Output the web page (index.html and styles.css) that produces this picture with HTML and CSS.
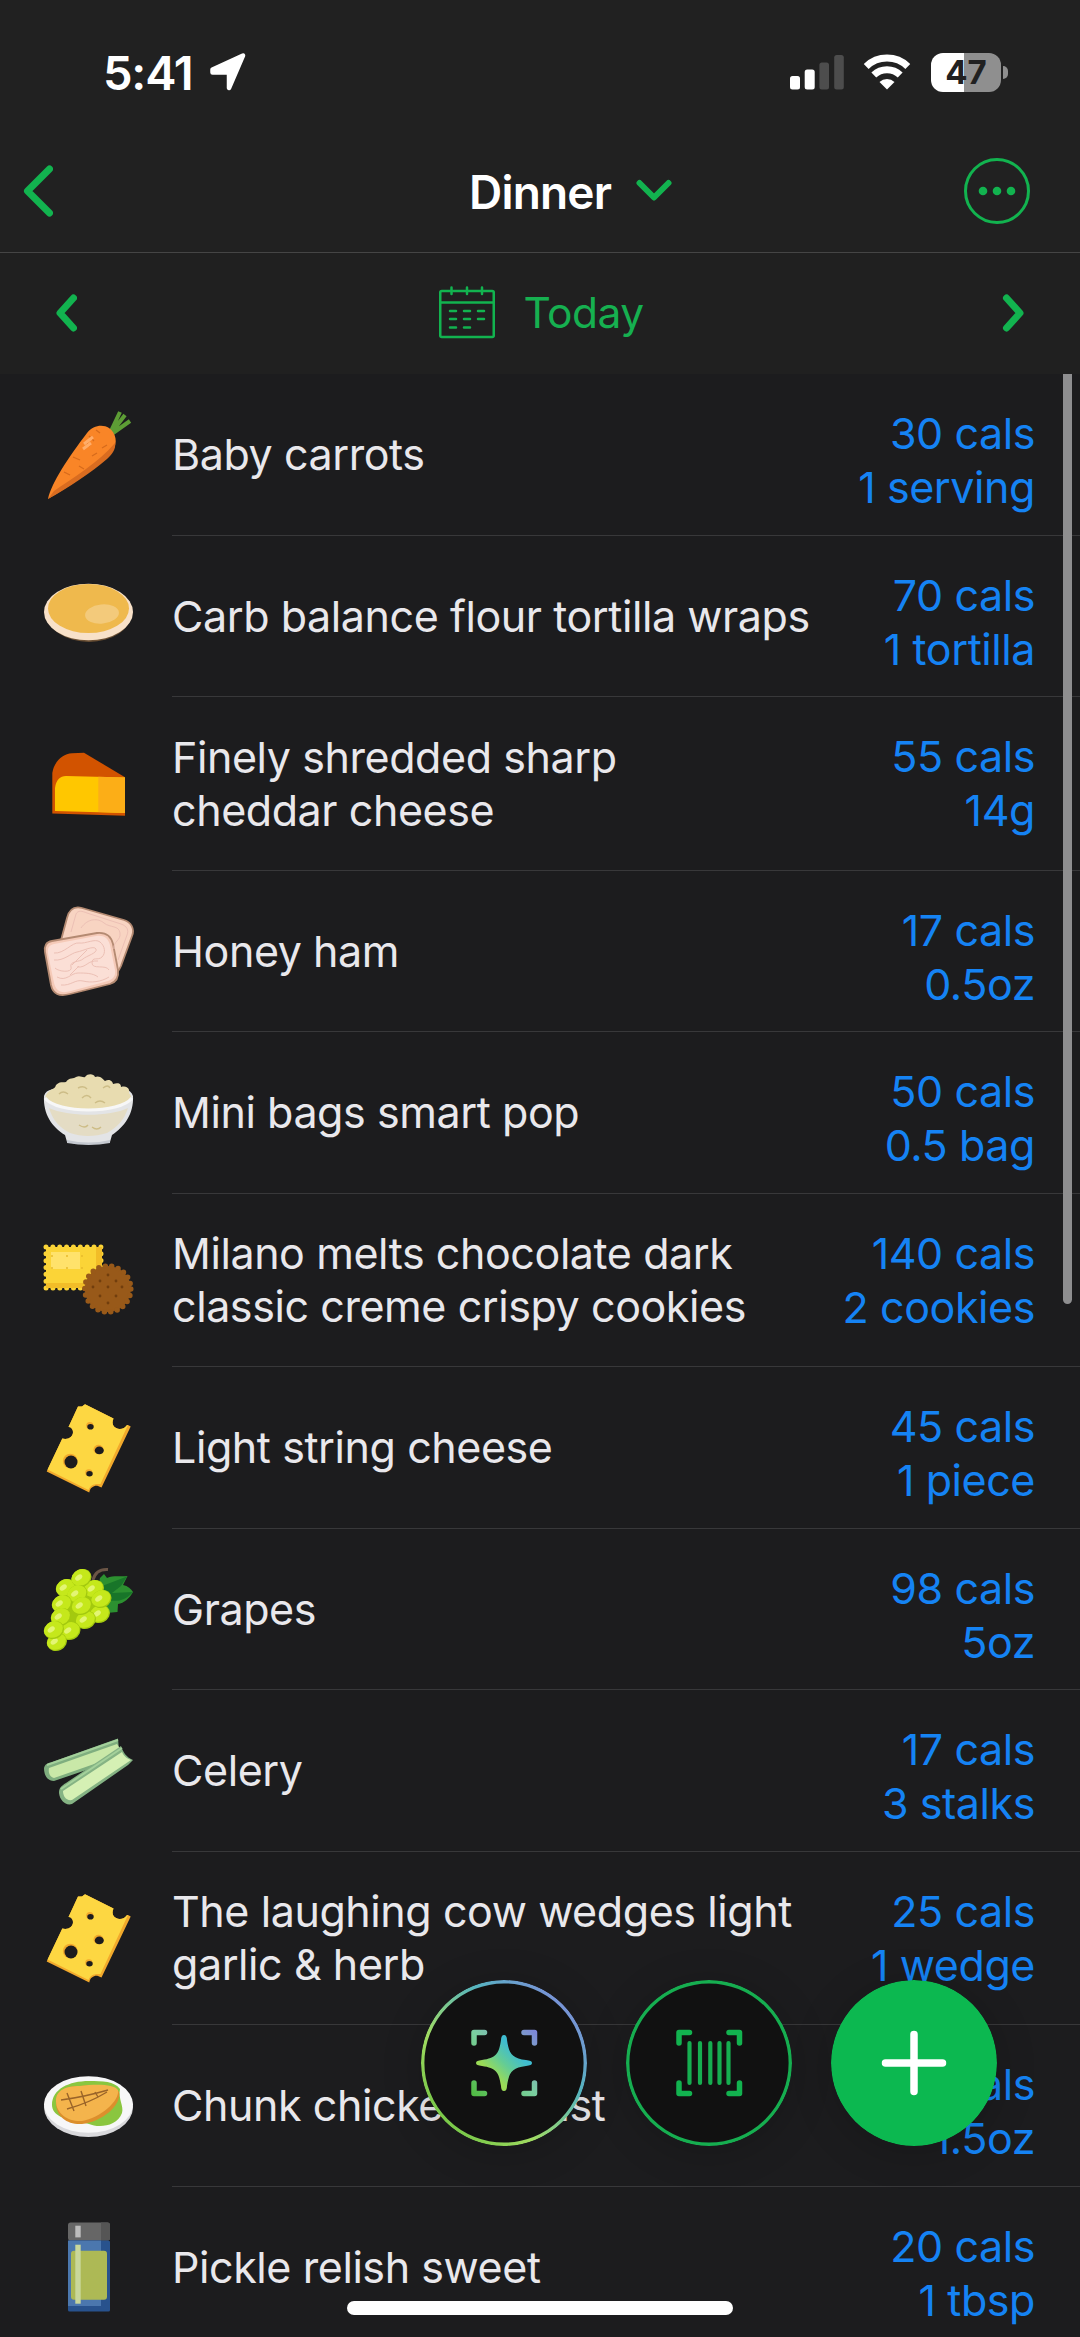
FILE: index.html
```html
<!DOCTYPE html>
<html lang="en">
<head>
    <meta charset="utf-8">
    <title>Dinner</title>
    <link rel="stylesheet" href="styles.css">
</head>
<body>
    <div class="screen">
        <header class="header">
            <div class="status-bar">
                <div class="status-left">
                    <span class="time">5:41</span>
                    <svg class="location" width="38" height="38" viewBox="0 0 38 38"><path d="M3.500 16.500 34 2.500 20 35V19.500H3.500Z" fill="#fff" stroke="#fff" stroke-width="4.500" stroke-linejoin="round"/></svg>
                </div>
                <div class="status-right">
                    <svg width="54" height="36" viewBox="0 0 54 36">
                        <rect x="0" y="22" width="10" height="13.500" rx="2.500" fill="#fff"/>
                        <rect x="14.700" y="15.500" width="10" height="20" rx="2.500" fill="#fff"/>
                        <rect x="29.400" y="8.500" width="9.600" height="27" rx="2.500" fill="#4d4d4d"/>
                        <rect x="44.200" y="1" width="9.600" height="34.500" rx="2.500" fill="#4d4d4d"/>
                    </svg>
                    <svg class="wifi" width="48" height="36" viewBox="0 0 48 36">
                        <g fill="none" stroke="#fff" stroke-width="7">
                            <path d="M3.200 12.500a30 30 0 0 1 41.600 0"/>
                            <path d="M10.800 21a19 19 0 0 1 26.400 0"/>
                        </g>
                        <path d="M24 35.500 16.500 28a10.800 10.800 0 0 1 15 0Z" fill="#fff"/>
                    </svg>
                    <div class="battery"><span>47</span></div>
                </div>
            </div>
            <div class="nav-bar">
                <svg class="nav-back" width="32" height="54" viewBox="0 0 32 54"><path d="M28.500 5 6.500 27 28.500 49"/></svg>
                <h1>Dinner</h1>
                <svg class="nav-down" width="38" height="24" viewBox="0 0 38 24"><path d="M4.500 4 19 18.500 33.500 4"/></svg>
                <svg class="nav-more" width="66" height="66" viewBox="0 0 66 66">
                    <circle cx="33" cy="33" r="31.500"/>
                    <g class="dots"><circle cx="19" cy="33" r="4.300"/><circle cx="33" cy="33" r="4.300"/><circle cx="47" cy="33" r="4.300"/></g>
                </svg>
            </div>
        </header>

        <div class="date-bar">
            <svg width="22" height="38" viewBox="0 0 22 38"><path d="M18.500 4 5 19 18.500 34"/></svg>
            <div class="date">
                <svg class="calendar" width="56" height="53" viewBox="0 0 56 53">
                    <rect x="1.250" y="5" width="53.500" height="46" rx="1.500"/>
                    <path d="M1 16.500H55M12.500 1.500V8M28 1.500V8M43 1.500V8"/>
                    <path d="M11 25h6M25 25h6M39 25h6M11 33h6M25 33h6M39 33h6M11 41.500h6M25 41.500h6"/>
                </svg>
                <span>Today</span>
            </div>
            <svg width="22" height="38" viewBox="0 0 22 38"><path d="M4.500 4 18 19 4.500 34"/></svg>
        </div>

        <ul class="food-list">
            <li class="food">
                <svg class="food-icon" viewBox="0 0 90 90">
                    <g fill="none" stroke="#5d9d35" stroke-width="4"><path d="M67 21 76 2M68 22 81 5M69 23 86 11"/></g>
                    <path d="M4 89C8 72 24 48 43 23 49 15 59 14 65 18 72 23 74 33 69 40 62 51 30 74 4 89Z" fill="#f98527"/>
                    <path d="M4 89 10 81C30 67 54 53 71 33 72 38 69 44 63 49 48 62 24 78 4 89Z" fill="#d96c20"/>
                    <path d="M45 26 50 31M42 32 46 36M52 20 56 23M29 47 36 50M35 56 40 59M48 46 53 43M20 62 26 65M58 38 63 35" stroke="#d66b1c" stroke-width="1.300"/>
                    <path d="M40 34 49 27M39 39 47 33" stroke="#ffad69" stroke-width="3"/>
                </svg>
                <div class="food-name">Baby carrots</div>
                <div class="food-info">30 cals<br>1 serving</div>
            </li>
            <li class="food">
                <svg class="food-icon" viewBox="0 0 90 90">
                    <ellipse cx="45" cy="43" rx="42" ry="28" fill="#6a4f34"/>
                    <ellipse cx="44.500" cy="41" rx="44.500" ry="28.300" fill="#f8e1c9"/>
                    <ellipse cx="44.500" cy="37.500" rx="40.500" ry="24.500" fill="#efb94d"/>
                    <ellipse cx="58" cy="43" rx="17" ry="9.500" fill="#f3ca7b" transform="rotate(-6 58 43)"/>
                </svg>
                <div class="food-name">Carb balance flour tortilla wraps</div>
                <div class="food-info">70 cals<br>1 tortilla</div>
            </li>
            <li class="food tall">
                <svg class="food-icon" viewBox="0 0 90 90">
                    <path d="M8.300 74.500V34C10 23 18 15 28 14.300L40 13.700 81 38.300V76.700Z" fill="#d25300"/>
                    <path d="M11 72V49C12 41 16 37 22 37L81 38.500V74Z" fill="#ffc700"/>
                    <path d="M54.300 37.800 81 38.500V74L54.300 73Z" fill="#fcae17"/>
                </svg>
                <div class="food-name">Finely shredded sharp<br>cheddar cheese</div>
                <div class="food-info">55 cals<br>14g</div>
            </li>
            <li class="food">
                <svg class="food-icon" viewBox="0 0 90 90">
                    <g stroke="#b48a72" stroke-width="1.800">
                        <path d="M16 38 23 12C25 4 30 0 38 2L80 14C87 16 91 23 88 30L77 60C72 72 65 70 56 67L24 58C17 56 14 47 16 38Z" fill="#f8d4c2"/>
                        <path d="M8 35 53 27C62 26 67 30 69 38L74 64C75 72 72 76 66 78L26 88C15 91 9 88 7 79L1 46C0 40 2 36 8 35Z" fill="#f5cab8"/>
                    </g>
                    <path d="M10 38 52 30C60 29 64 32 66 39L71 64C72 70 69 73 64 75L27 85C17 88 12 85 10 77L4 48C3 42 5 39 10 38Z" fill="#fbdfd6"/>
                    <g fill="none" stroke="#ecc0b5" stroke-width="1">
                        <path d="M27 26 32 8C34 4 38 5 43 7L77 18C83 20 85 24 83 29L74 54M37 22C44 12 54 12 60 17S75 19 76 27 69 35 70 43"/>
                        <path d="M10 47C20 48 28 36 35 37S51 32 56 36 62 47 58 51 48 50 48 57 62 58 65 64M10 54C20 55 27 47 33 46S50 39 52 43 42 50 39 53 25 55 27 61 15 66 11 62M13 71C22 76 27 67 34 67S49 67 54 71M17 79C27 80 31 73 39 75S57 76 65 71M28 59 43 44M33 61C43 62 43 54 54 55M26 69 35 60"/>
                    </g>
                </svg>
                <div class="food-name">Honey ham</div>
                <div class="food-info">17 cals<br>0.5oz</div>
            </li>
            <li class="food">
                <svg class="food-icon" viewBox="0 0 90 90">
                    <path d="M0 28C3 18 20 20 44.500 20S86 18 89 28C90 46 80 59 68 67L66 74C52 77 36 77 23 74L21 67C8 59 -1 46 0 28Z" fill="#e3e4e6"/>
                    <path d="M5 40C24 49 66 49 84 40 80 53 72 60 63 65 50 69 38 69 26 65 16 60 9 53 5 40Z" fill="#e4dcc4"/>
                    <path d="M2 27C6 20 11 22 12 17 16 13 19 15 22 14 25 9 30 11 32 9 36 7 39 10 41 9 44 5 50 6 51 9 56 7 59 11 61 13 66 10 69 14 69 16 76 14 77 17 77 19 84 17 86 22 85 25 90 30 85 36 77 38 60 43 25 43 10 37 4 34 0 31 2 27Z" fill="#e8dcb0"/>
                    <path d="M15 26q4-4 9 0M38 30q5-5 9 0M51 35q5-4 10 0M34 20q6-3 9 1M59 20q5-4 7 0M35 57q6 4 9 0M48 59q5 4 9 0" fill="none" stroke="#cdbd87" stroke-width="1.400"/>
                    <path d="M1 30C13 46 76 46 88 30" fill="none" stroke="#f7f7f7" stroke-width="3"/>
                    <path d="M23 72Q45 77 66 72V75Q45 79 23 75Z" fill="#c4c8cf"/>
                </svg>
                <div class="food-name">Mini bags smart pop</div>
                <div class="food-info">50 cals<br>0.5 bag</div>
            </li>
            <li class="food tall">
                <svg class="food-icon" viewBox="0 0 90 90">
                    <rect x="2" y="12" width="55" height="41" fill="#fbd437" stroke="#fbd437" stroke-width="5" stroke-linecap="round" stroke-dasharray="0 6.860"/>
                    <path d="M52 12h6v41h-6zM2 48h50v5H2z" fill="#f2bd28"/>
                    <rect x="7" y="17" width="29" height="17" fill="#ffe26b"/>
                    <path d="M8 21h0M23 21h0M38 21h0M8 33h0M23 33h0M38 33h0" stroke="#e8bb2c" stroke-width="2" stroke-linecap="round"/>
                    <circle cx="63.800" cy="54" r="23" fill="#985919" stroke="#985919" stroke-width="5.500" stroke-linecap="round" stroke-dasharray="0 6.570"/>
                    <g fill="#713e0d"><circle cx="64" cy="40" r="1.400"/><circle cx="56" cy="46" r="1.400"/><circle cx="72" cy="46" r="1.400"/><circle cx="49" cy="52" r="1.400"/><circle cx="64" cy="52" r="1.400"/><circle cx="78" cy="52" r="1.400"/><circle cx="56" cy="61" r="1.400"/><circle cx="72" cy="61" r="1.400"/><circle cx="64" cy="68" r="1.400"/></g>
                </svg>
                <div class="food-name">Milano melts chocolate dark<br>classic creme crispy cookies</div>
                <div class="food-info">140 cals<br>2 cookies</div>
            </li>
            <li class="food">
                <svg class="food-icon" viewBox="0 0 90 90">
                    <defs>
                        <g id="cheese">
                            <path d="M34 3.500 38 3.500 41 1.200 69.500 15.500C66 23 73 28 80 25 82 24 82 22 84 22L86.700 23.500 57.500 84.500 54 83C51 82 46 84 45.300 89.500L2.700 68.500 18.300 35.500C24 37 29 34 29 29 29 26 27 24 24.500 24Z" fill="#f2a92c"/>
                            <path d="M34 3.500 38 3.500 41 1.200 69.500 15.500C66 23 73 28 80 25 82 24 82 22 84 22L56.500 81 54 81C49 81 46 83 44.500 87L3.500 66.500 18.300 35.500C24 37 29 34 29 29 29 26 27 24 24.500 24Z" fill="#fdd742"/>
                            <g fill="#f2a92c"><ellipse cx="45.800" cy="22.500" rx="3.600" ry="3.500"/><ellipse cx="54.500" cy="46.400" rx="5" ry="4.600"/><circle cx="26.200" cy="58" r="7.300"/><ellipse cx="44.800" cy="69.700" rx="3.600" ry="3.400"/></g>
                            <g fill="#1c1c1e"><ellipse cx="46.500" cy="23.800" rx="3.200" ry="2.800"/><ellipse cx="55.300" cy="47.400" rx="4.500" ry="3.900"/><circle cx="27" cy="59" r="6.500"/><ellipse cx="45.500" cy="70.800" rx="3.200" ry="2.700"/></g>
                        </g>
                    </defs>
                    <use href="#cheese"/>
                </svg>
                <div class="food-name">Light string cheese</div>
                <div class="food-info">45 cals<br>1 piece</div>
            </li>
            <li class="food">
                <svg class="food-icon" viewBox="0 0 90 90">
                    <defs>
                        <g id="grape">
                            <ellipse rx="10.300" ry="8.700" fill="#a3c90f" transform="rotate(-25)"/>
                            <ellipse cx="-.3" cy="-.7" rx="9.800" ry="8" fill="#c5e81b" transform="rotate(-25)"/>
                            <ellipse cx="-2" cy="-2" rx="4" ry="2.500" fill="#e3f573" transform="rotate(-35)"/>
                        </g>
                    </defs>
                    <path d="M49 16C51 8 57 5 64 5.500" fill="none" stroke="#6b5546" stroke-width="3"/>
                    <path d="M54 24 56 14 60 10 63 14C70 11 76 13 83.500 12L79 21C84 22 87 25 89 28 85 35 80 39 74 40L73.500 48 62 49Z" fill="#2c9030"/>
                    <path d="M58 22 83 12.500 77 22 68 29 89 28C81 37 72 38 65 36Z" fill="#187529"/>
                    <path d="M30 20 54 23 60 44 30 70 10 72Z" fill="#a3c90f"/>
                    <use href="#grape" x="22" y="24"/><use href="#grape" x="50" y="25"/>
                    <use href="#grape" x="37.500" y="14"/><use href="#grape" x="33.500" y="30"/>
                    <use href="#grape" x="56" y="50"/><use href="#grape" x="57.500" y="35"/>
                    <use href="#grape" x="42" y="56"/><use href="#grape" x="38" y="42"/>
                    <use href="#grape" x="18" y="40"/><use href="#grape" x="26.500" y="67"/>
                    <use href="#grape" x="17" y="53"/><use href="#grape" x="13" y="78"/><use href="#grape" x="10" y="66"/>
                </svg>
                <div class="food-name">Grapes</div>
                <div class="food-info">98 cals<br>5oz</div>
            </li>
            <li class="food">
                <svg class="food-icon" viewBox="0 0 90 90">
                    <path d="M0 42C1 38 4 37 8 36L74 12.500 75 24 60 38 10 55C4 55 0 50 0 42Z" fill="#7fae7f"/>
                    <path d="M5 42 73 18 78 26 56 36 10 52C6 51 4 47 5 42Z" fill="#c9e8a8"/>
                    <path d="M3 39 74 14" stroke="#a4d19b" stroke-width="2"/>
                    <path d="M15 67C15 62 17 60 22 57L77 20C79 26 82 31 89 34L84 39 28 78C22 80 16 75 15 67Z" fill="#85b384"/>
                    <path d="M19 65 78 26C80 30 82 32 87 34L28 74C22 75 19 70 19 65Z" fill="#d5f0b4"/>
                    <path d="M17 63 78 22" stroke="#a4d19b" stroke-width="2"/>
                </svg>
                <div class="food-name">Celery</div>
                <div class="food-info">17 cals<br>3 stalks</div>
            </li>
            <li class="food tall">
                <svg class="food-icon" viewBox="0 0 90 90"><use href="#cheese"/></svg>
                <div class="food-name">The laughing cow wedges light<br>garlic &amp; herb</div>
                <div class="food-info">25 cals<br>1 wedge</div>
            </li>
            <li class="food">
                <svg class="food-icon" viewBox="0 0 90 90">
                    <ellipse cx="44.500" cy="46" rx="44.500" ry="30" fill="#d9d9dc"/>
                    <ellipse cx="44.500" cy="43.500" rx="44.500" ry="28.300" fill="#f7f7f8"/>
                    <path d="M8 44C8 28 25 20 45 20 59 20 70 20 76 28 74 38 80 45 78 52 73 66 54 67 45 63L17 56C11 53 8 49 8 44Z" fill="#8ac63f"/>
                    <path d="M12 42C11 30 22 25 36 25 52 23 71 23 75 31 78 44 58 61 38 63 24 64 12 56 12 42Z" fill="#dc8f2c"/>
                    <path d="M12 40C12 29 22 25 36 25 52 23 70 23 74 29 76 40 56 57 38 60 25 61 12 53 12 40Z" fill="#f4b44c"/>
                    <path d="M17 39Q40 36 64 29M23 48Q45 42 63 31M23 32 30 50M37 30 42 45M51 31 54 36" fill="none" stroke="#9a6429" stroke-width="1.400"/>
                </svg>
                <div class="food-name">Chunk chicken breast</div>
                <div class="food-info">60 cals<br>1.5oz</div>
            </li>
            <li class="food">
                <svg class="food-icon" viewBox="0 0 90 90">
                    <rect x="24" y=".5" width="42" height="18" rx="2.500" fill="#666"/>
                    <path d="M57 .5h6.500a2.500 2.500 0 0 1 2.500 2.500v13a2.500 2.500 0 0 1-2.500 2.500H57z" fill="#555"/>
                    <rect x="24" y="18.500" width="42" height="71" rx="1.500" fill="#28528d"/>
                    <rect x="24" y="18.500" width="33" height="65.500" fill="#4b77ae"/>
                    <rect x="27" y="28.700" width="36" height="49" rx="3" fill="#adb955"/>
                    <path d="M31.300 22.700h5.400v59h-5.400z" fill="#c9d79b"/>
                    <path d="M31.300 3.700h5.400v11.700h-5.400z" fill="#bdbdbd"/>
                </svg>
                <div class="food-name">Pickle relish sweet</div>
                <div class="food-info">20 cals<br>1 tbsp</div>
            </li>
        </ul>

        <div class="scrollbar"></div>

        <div class="actions">
            <svg width="166" height="166" viewBox="0 0 166 166">
                <defs>
                    <linearGradient id="ring" x1="0" y1="1" x2="1" y2="0">
                        <stop offset=".15" stop-color="#7bc94a"/><stop offset=".35" stop-color="#a1dc62"/><stop offset=".65" stop-color="#55b4c0"/><stop offset=".88" stop-color="#7b90d8"/>
                    </linearGradient>
                    <linearGradient id="frame" gradientUnits="userSpaceOnUse" x1="50" y1="116" x2="116" y2="50">
                        <stop offset="0" stop-color="#4fbb3f"/><stop offset=".5" stop-color="#7bcfa0"/><stop offset="1" stop-color="#7d84dc"/>
                    </linearGradient>
                    <linearGradient id="spark" gradientUnits="userSpaceOnUse" x1="67" y1="99" x2="99" y2="67">
                        <stop offset=".15" stop-color="#9bdc56"/><stop offset=".5" stop-color="#63cc96"/><stop offset=".85" stop-color="#3fbcd0"/>
                    </linearGradient>
                </defs>
                <circle cx="83" cy="83" r="81.300" fill="#111" stroke="url(#ring)" stroke-width="3.400"/>
                <path d="M53 63V52.500H63.500M103 52.500H113.500V63M53 103V113.500H63.500M103 113.500H113.500V103" fill="none" stroke="url(#frame)" stroke-width="5.500" stroke-linecap="round" stroke-linejoin="round"/>
                <path d="M83 55C85 55 86 57 86 60 88 74 91 78 105 80 109 80.500 111 81 111 83S109 85.500 105 86C91 88 88 92 86 106 86 109 85 111 83 111S80 109 80 106C78 92 75 88 61 86 57 85.500 55 85 55 83S57 80.500 61 80C75 78 78 74 80 60 80 57 81 55 83 55Z" fill="url(#spark)"/>
            </svg>
            <svg width="166" height="166" viewBox="0 0 166 166">
                <circle cx="83" cy="83" r="81.300" fill="#111" stroke="#16ae50" stroke-width="3.400"/>
                <path d="M53 63V52.500H63.500M103 52.500H113.500V63M53 103V113.500H63.500M103 113.500H113.500V103" fill="none" stroke="#12b34f" stroke-width="5.500" stroke-linecap="round" stroke-linejoin="round"/>
                <path d="M63.500 63V103M74 63V103M84.300 63V103M93.500 63V103M102.500 63V103" stroke="#16ae50" stroke-width="4.200" stroke-linecap="round"/>
            </svg>
            <svg width="166" height="166" viewBox="0 0 166 166">
                <circle cx="83" cy="83" r="83" fill="#0cb850"/>
                <path d="M83 54.500V111.500M54.500 83H111.500" stroke="#fff" stroke-width="7.500" stroke-linecap="round"/>
            </svg>
        </div>
        <div class="home-indicator"></div>
    </div>
</body>
</html>
```

FILE: styles.css
```css
* {
    box-sizing: border-box;
}

body {
    margin: 0;
    background-color: #1c1c1e;
    font-family: Inter, "Liberation Sans", sans-serif;
}

svg {
    display: block;
    flex-shrink: 0;
}

.screen {
    position: relative;
    width: 1080px;
    height: 2337px;
    overflow: hidden;
    color: #e9e8ec;
}

.header {
    height: 253px;
    background-color: #212121;
    border-bottom: 1px solid #454545;
}

.status-bar {
    display: flex;
    justify-content: space-between;
    height: 144px;
    padding: 0 79px 0 103px;
    align-items: center;
}

.status-left,
.status-right {
    display: flex;
    align-items: center;
}

.time {
    width: 90px;
    font-size: 47px;
    font-weight: 600;
    letter-spacing: -1.2px;
    white-space: nowrap;
    color: #fff;
}

.location {
    margin-left: 16px;
}

.wifi {
    margin: 0 20px 0 19px;
}

.battery {
    position: relative;
    width: 70px;
    height: 39px;
    border-radius: 12px;
    background: linear-gradient(to right, #fff 47%, #8f8f8f 47%);
    color: #212121;
    font-size: 33px;
    font-weight: 700;
    line-height: 39px;
    text-align: center;
}

.battery::after {
    content: "";
    position: absolute;
    left: 72px;
    top: 13px;
    width: 5px;
    height: 13px;
    border-radius: 0 5px 5px 0;
    background-color: #8f8f8f;
}

.nav-bar {
    display: flex;
    align-items: center;
    height: 93px;
    padding: 0 50px 0 21px;
}

.nav-bar svg,
.date-bar svg {
    fill: none;
    stroke: #12b34f;
    stroke-width: 7;
    stroke-linecap: round;
    stroke-linejoin: round;
}

.nav-bar h1 {
    width: 142px;
    margin: 2px 24px 0 416px;
    color: #fff;
    font-size: 46px;
    font-weight: 600;
    letter-spacing: -0.8px;
    white-space: nowrap;
}

.nav-bar .nav-down {
    stroke-width: 6;
}

.nav-bar .nav-more {
    margin-left: auto;
    stroke-width: 3;
}

.nav-more .dots {
    fill: #12b34f;
    stroke: none;
}

.date-bar {
    display: flex;
    align-items: center;
    justify-content: space-between;
    height: 121px;
    padding: 0 56px 2px 55px;
    background-color: #202020;
}

.date {
    display: flex;
    align-items: center;
    gap: 28px;
    margin-left: 4px;
    color: #16b050;
    font-size: 42.5px;
    letter-spacing: -0.5px;
}

.date-bar .calendar {
    stroke-width: 2.5;
}

.food-list {
    margin: 0;
    padding: 0;
    list-style: none;
    font-size: 43px;
    letter-spacing: -0.42px;
}

.food {
    position: relative;
    display: flex;
    align-items: center;
    height: 161.5px;
    padding: 0 45px 0 44px;
}

.food.tall {
    height: 173.5px;
}

/* separator starts at the text, not at the icon */
.food::after {
    content: "";
    position: absolute;
    left: 172px;
    right: 0;
    bottom: 0;
    height: 1px;
    background-color: #38383a;
}

.food-icon {
    width: 90px;
    height: 90px;
    overflow: visible;
}

.food-name {
    margin-left: 38px;
    line-height: 53px;
    white-space: nowrap;
}

.food-info {
    align-self: flex-start;
    margin-left: auto;
    padding-top: 32px;
    color: #1583f4;
    line-height: 54px;
    text-align: right;
    white-space: nowrap;
}

.scrollbar {
    position: absolute;
    top: 374px;
    right: 8px;
    width: 9px;
    height: 930px;
    border-radius: 0 0 5px 5px;
    background-color: #8e8e90;
}

.actions {
    position: absolute;
    right: 83px;
    bottom: 191px;
    display: flex;
    gap: 39px;
}

.actions svg {
    border-radius: 50%;
    box-shadow: 0 6px 40px rgba(0, 0, 0, 0.18);
}

.home-indicator {
    position: absolute;
    left: 347px;
    bottom: 22px;
    width: 386px;
    height: 14px;
    border-radius: 7px;
    background-color: #fff;
}
```
